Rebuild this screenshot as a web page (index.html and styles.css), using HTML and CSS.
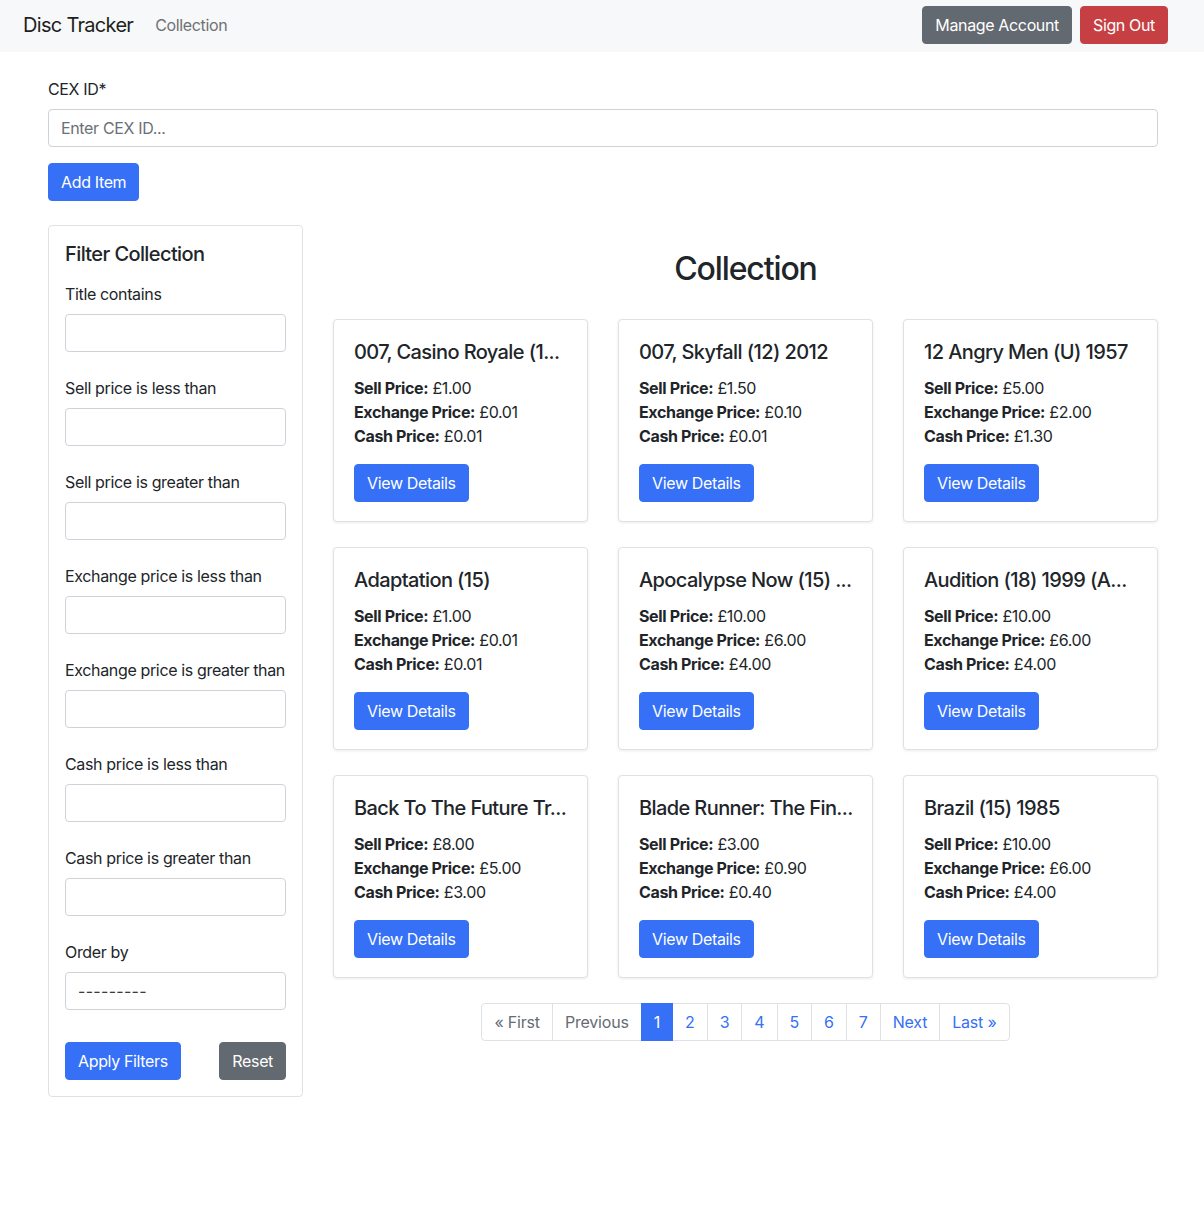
FILE: index.html
```html
<!DOCTYPE html>
<html lang="en">
<head>
<meta charset="utf-8">
<title>Disc Tracker</title>
<link rel="stylesheet" href="styles.css">
</head>
<body>
<nav class="navbar">
  <div class="nav-left">
    <a class="brand" href="#">Disc Tracker</a>
    <a class="nav-link" href="#">Collection</a>
  </div>
  <div class="nav-right">
    <button class="btn btn-secondary">Manage Account</button>
    <button class="btn btn-danger">Sign Out</button>
  </div>
</nav>

<main class="container">
  <form class="add-form">
    <label class="form-label" for="cex">CEX ID*</label>
    <input class="form-control" id="cex" type="text" placeholder="Enter CEX ID...">
    <button class="btn btn-primary add-btn" type="button">Add Item</button>
  </form>

  <div class="layout">
    <aside class="filter-card">
      <h5 class="filter-title">Filter Collection</h5>
      <div class="field"><label class="form-label">Title contains</label><input class="form-control" type="text"></div>
      <div class="field"><label class="form-label">Sell price is less than</label><input class="form-control" type="text"></div>
      <div class="field"><label class="form-label">Sell price is greater than</label><input class="form-control" type="text"></div>
      <div class="field"><label class="form-label">Exchange price is less than</label><input class="form-control" type="text"></div>
      <div class="field"><label class="form-label">Exchange price is greater than</label><input class="form-control" type="text"></div>
      <div class="field"><label class="form-label">Cash price is less than</label><input class="form-control" type="text"></div>
      <div class="field"><label class="form-label">Cash price is greater than</label><input class="form-control" type="text"></div>
      <div class="field field-last"><label class="form-label">Order by</label><div class="form-control select">---------</div></div>
      <div class="filter-actions">
        <button class="btn btn-primary" type="button">Apply Filters</button>
        <button class="btn btn-secondary" type="button">Reset</button>
      </div>
    </aside>

    <section class="collection">
      <h2 class="collection-title">Collection</h2>
      <div class="cards">
        <div class="card"><h5 class="card-title">007, Casino Royale (1...</h5><p class="prices"><b>Sell Price:</b> £1.00<br><b>Exchange Price:</b> £0.01<br><b>Cash Price:</b> £0.01</p><button class="btn btn-primary">View Details</button></div>
        <div class="card"><h5 class="card-title">007, Skyfall (12) 2012</h5><p class="prices"><b>Sell Price:</b> £1.50<br><b>Exchange Price:</b> £0.10<br><b>Cash Price:</b> £0.01</p><button class="btn btn-primary">View Details</button></div>
        <div class="card"><h5 class="card-title">12 Angry Men (U) 1957</h5><p class="prices"><b>Sell Price:</b> £5.00<br><b>Exchange Price:</b> £2.00<br><b>Cash Price:</b> £1.30</p><button class="btn btn-primary">View Details</button></div>
        <div class="card"><h5 class="card-title">Adaptation (15)</h5><p class="prices"><b>Sell Price:</b> £1.00<br><b>Exchange Price:</b> £0.01<br><b>Cash Price:</b> £0.01</p><button class="btn btn-primary">View Details</button></div>
        <div class="card"><h5 class="card-title">Apocalypse Now (15) ...</h5><p class="prices"><b>Sell Price:</b> £10.00<br><b>Exchange Price:</b> £6.00<br><b>Cash Price:</b> £4.00</p><button class="btn btn-primary">View Details</button></div>
        <div class="card"><h5 class="card-title">Audition (18) 1999 (A...</h5><p class="prices"><b>Sell Price:</b> £10.00<br><b>Exchange Price:</b> £6.00<br><b>Cash Price:</b> £4.00</p><button class="btn btn-primary">View Details</button></div>
        <div class="card"><h5 class="card-title">Back To The Future Tr...</h5><p class="prices"><b>Sell Price:</b> £8.00<br><b>Exchange Price:</b> £5.00<br><b>Cash Price:</b> £3.00</p><button class="btn btn-primary">View Details</button></div>
        <div class="card"><h5 class="card-title">Blade Runner: The Fin...</h5><p class="prices"><b>Sell Price:</b> £3.00<br><b>Exchange Price:</b> £0.90<br><b>Cash Price:</b> £0.40</p><button class="btn btn-primary">View Details</button></div>
        <div class="card"><h5 class="card-title">Brazil (15) 1985</h5><p class="prices"><b>Sell Price:</b> £10.00<br><b>Exchange Price:</b> £6.00<br><b>Cash Price:</b> £4.00</p><button class="btn btn-primary">View Details</button></div>
      </div>
      <nav class="pager">
        <ul class="pagination">
          <li class="page-item disabled"><span>« First</span></li>
          <li class="page-item disabled"><span>Previous</span></li>
          <li class="page-item active"><span>1</span></li>
          <li class="page-item"><a href="#">2</a></li>
          <li class="page-item"><a href="#">3</a></li>
          <li class="page-item"><a href="#">4</a></li>
          <li class="page-item"><a href="#">5</a></li>
          <li class="page-item"><a href="#">6</a></li>
          <li class="page-item"><a href="#">7</a></li>
          <li class="page-item"><a href="#">Next</a></li>
          <li class="page-item"><a href="#">Last »</a></li>
        </ul>
      </nav>
    </section>
  </div>
</main>
</body>
</html>
```

FILE: styles.css
```css
* { box-sizing: border-box; }
html, body {
  margin: 0;
  padding: 0;
  background: #fff;
  color: #212529;
  font-family: Inter, "Noto Sans", "Liberation Sans", sans-serif;
  font-size: 16px;
  line-height: 24px;
  letter-spacing: -0.022em;
}
a { text-decoration: none; }

.navbar {
  height: 52px;
  background: #f7f8f9;
  display: flex;
  align-items: flex-start;
  justify-content: space-between;
  padding: 6px 36px 0 23px;
}
.nav-left { display: flex; align-items: center; height: 38px; }
.brand {
  font-size: 20px;
  line-height: 30px;
  color: #1d1f21;
  margin-right: 22px;
  letter-spacing: -0.035em;
}
.nav-link { color: #6f7174; font-size: 16px; }
.nav-right { display: flex; gap: 8px; }

.btn {
  font-family: inherit;
  font-size: 16px;
  line-height: 24px;
  letter-spacing: -0.022em;
  height: 38px;
  padding: 6px 12px;
  border: 1px solid transparent;
  border-radius: 4px;
  color: #fff;
  cursor: pointer;
}
.btn-primary { background: #3570f6; border-color: #3570f6; }
.btn-secondary { background: #636970; border-color: #636970; }
.btn-danger { background: #c64043; border-color: #c64043; }

.container {
  width: 1110px;
  margin: 0 auto;
  padding-top: 25px;
  padding-bottom: 40px;
  position: relative;
  left: 1px;
}
.add-form { display: flex; flex-direction: column; align-items: flex-start; margin-bottom: 24px; }
.form-label { display: block; margin-bottom: 8px; color: #212529; }
.form-control {
  display: block;
  width: 100%;
  height: 38px;
  padding: 6px 12px;
  font-family: inherit;
  font-size: 16px;
  line-height: 24px;
  letter-spacing: -0.022em;
  color: #212529;
  background: #fff;
  border: 1px solid #cfd3d9;
  border-radius: 4px;
}
.form-control::placeholder { color: #6a7077; }
.add-btn { margin-top: 16px; }

.layout {
  display: grid;
  grid-template-columns: 255px 1fr;
  column-gap: 30px;
  align-items: start;
}

.filter-card {
  border: 1px solid #dfe1e4;
  border-radius: 4px;
  padding: 16px 16px 16px;
}
.filter-title {
  margin: 0 0 16px;
  font-size: 20px;
  line-height: 24px;
  font-weight: 500;
  letter-spacing: -0.03em;
}
.field { margin-bottom: 24px; }
.field-last { margin-bottom: 32px; }
.select { color: #3a3d40; padding-left: 12px; letter-spacing: 0.3px; }
.filter-actions { display: flex; justify-content: space-between; }

.collection-title {
  text-align: center;
  font-size: 32px;
  line-height: 38px;
  font-weight: 500;
  letter-spacing: -0.035em;
  margin: 25px 0 31px;
}
.cards {
  display: grid;
  grid-template-columns: repeat(3, 255px);
  column-gap: 30px;
  row-gap: 25px;
}
.card {
  border: 1px solid #dfe1e4;
  border-radius: 4px;
  padding: 20px 20px 19px;
  box-shadow: 0 1px 3px rgba(0,0,0,0.08);
  background: #fff;
}
.card-title {
  margin: 0 0 12px;
  font-size: 20px;
  line-height: 24px;
  font-weight: 500;
  letter-spacing: -0.03em;
  white-space: nowrap;
}
.prices { margin: 0 0 16px; }
.prices b { font-weight: 700; }

.pager { display: flex; justify-content: center; margin-top: 25px; }
.pagination {
  display: flex;
  list-style: none;
  margin: 0;
  padding: 0;
  letter-spacing: -0.012em;
}
.page-item > a, .page-item > span {
  display: block;
  height: 38px;
  padding: 6px 12px;
  border: 1px solid #dfe1e4;
  margin-left: -1px;
  color: #3570f6;
  background: #fff;
}
.page-item:first-child > span { margin-left: 0; border-radius: 4px 0 0 4px; }
.page-item:last-child > a { border-radius: 0 4px 4px 0; }
.page-item.disabled > span { color: #666c73; }
.page-item.active > span { background: #3570f6; border-color: #3570f6; color: #fff; position: relative; }
```
